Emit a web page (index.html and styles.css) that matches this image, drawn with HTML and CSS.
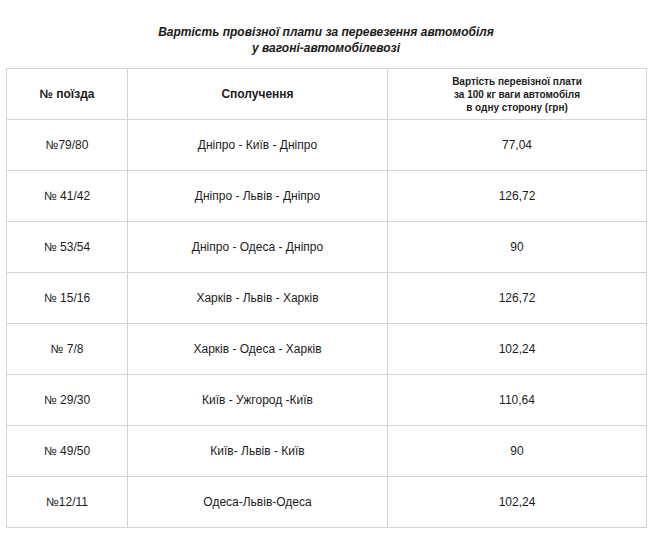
FILE: index.html
```html
<!DOCTYPE html>
<html lang="uk">
<head>
<meta charset="utf-8">
<title>Вартість провізної плати</title>
<link rel="stylesheet" href="styles.css">
</head>
<body>
<div class="page">
  <h2 class="title">Вартість провізної плати за перевезення автомобіля<br>у вагоні-автомобілевозі</h2>
  <table class="fares">
    <colgroup>
      <col class="c1"><col class="c2"><col class="c3">
    </colgroup>
    <thead>
      <tr>
        <th>№ поїзда</th>
        <th>Сполучення</th>
        <th class="small">Вартість перевізної плати<br>за 100 кг ваги автомобіля<br>в одну сторону (грн)</th>
      </tr>
    </thead>
    <tbody>
      <tr><td>№79/80</td><td>Дніпро - Київ - Дніпро</td><td>77,04</td></tr>
      <tr><td>№ 41/42</td><td>Дніпро - Львів - Дніпро</td><td>126,72</td></tr>
      <tr><td>№ 53/54</td><td>Дніпро - Одеса - Дніпро</td><td>90</td></tr>
      <tr><td>№ 15/16</td><td>Харків - Львів - Харків</td><td>126,72</td></tr>
      <tr><td>№ 7/8</td><td>Харків - Одеса - Харків</td><td>102,24</td></tr>
      <tr><td>№ 29/30</td><td>Київ - Ужгород -Київ</td><td>110,64</td></tr>
      <tr><td>№ 49/50</td><td>Київ- Львів - Київ</td><td>90</td></tr>
      <tr><td>№12/11</td><td>Одеса-Львів-Одеса</td><td>102,24</td></tr>
    </tbody>
  </table>
</div>
</body>
</html>
```
FILE: styles.css
```css
html, body {
  margin: 0;
  padding: 0;
  background: #ffffff;
}
body {
  font-family: "Liberation Sans", Arial, sans-serif;
  color: #1c1c1c;
}
.page {
  padding: 24px 6px 0 6px;
}
.title {
  margin: 0 0 12px 0;
  text-align: center;
  font-size: 12px;
  font-style: italic;
  font-weight: bold;
  line-height: 16px;
  color: #1a1a1a;
}
.fares {
  width: 640px;
  border-collapse: collapse;
  table-layout: fixed;
  font-size: 12px;
}
.c1 { width: 121px; }
.c2 { width: 260px; }
.c3 { width: 259px; }
.fares th,
.fares td {
  border: 1px solid #d4d4d4;
  text-align: center;
  vertical-align: middle;
  padding: 0;
  height: 50px;
}
.fares th {
  font-weight: bold;
  font-size: 12px;
}
.fares th.small {
  font-size: 10px;
  line-height: 13px;
}
```
